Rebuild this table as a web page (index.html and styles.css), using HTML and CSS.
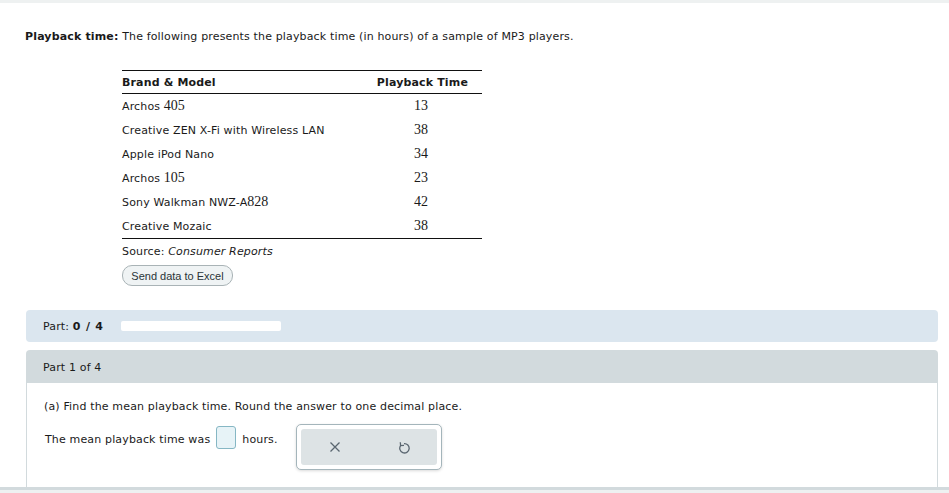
FILE: index.html
```html
<!DOCTYPE html>
<html>
<head>
<meta charset="utf-8">
<link rel="stylesheet" href="styles.css">
</head>
<body>
<div class="topbar"></div>
<div class="page">
  <p class="intro"><b>Playback time:</b> The following presents the playback time (in hours) of a sample of MP3 players.</p>
  <div class="tablewrap">
    <table class="data">
      <thead>
        <tr><th class="c1">Brand &amp; Model</th><th class="c2">Playback Time</th></tr>
      </thead>
      <tbody>
        <tr><td>Archos <span class="m">405</span></td><td class="n">13</td></tr>
        <tr><td>Creative ZEN X-Fi with Wireless LAN</td><td class="n">38</td></tr>
        <tr><td>Apple iPod Nano</td><td class="n">34</td></tr>
        <tr><td>Archos <span class="m">105</span></td><td class="n">23</td></tr>
        <tr><td>Sony Walkman NWZ-A<span class="m">828</span></td><td class="n">42</td></tr>
        <tr><td>Creative Mozaic</td><td class="n">38</td></tr>
      </tbody>
    </table>
    <div class="source">Source: <i>Consumer Reports</i></div>
    <button class="excel">Send data to Excel</button>
  </div>
  <div class="partbar">
    <span>Part: <b>0 / 4</b></span>
    <div class="progress"></div>
  </div>
  <div class="panel">
    <div class="panel-head">Part 1 of 4</div>
    <div class="panel-body">
      <p class="q">(a) Find the mean playback time. Round the answer to one decimal place.</p>
      <div class="answer">
        <span>The mean playback time was</span>
        <span class="input"></span>
        <span>hours.</span>
        <div class="tools">
          <div class="tools-inner">
            <svg width="12" height="12" viewBox="0 0 12 12"><path d="M1.5 1.5 L10.5 10.5 M10.5 1.5 L1.5 10.5" stroke="#5a6670" stroke-width="1.3" fill="none"/></svg>
            <svg width="12" height="14" viewBox="0 0 12 14"><path d="M2.6 5.6 A4.7 4.7 0 1 0 6 3.6" stroke="#5a6670" stroke-width="1.3" fill="none"/><path d="M2.3 2.2 L2.6 5.6 L6 5.4" stroke="#5a6670" stroke-width="1.3" fill="none"/></svg>
          </div>
        </div>
      </div>
    </div>
  </div>
</div>
<div class="bottombar"></div>
</body>
</html>
```
FILE: styles.css
```css
html, body {
  margin: 0;
  padding: 0;
  background: #fff;
}
body {
  font-family: "DejaVu Sans", Verdana, sans-serif;
  font-size: 11px;
  letter-spacing: 0.15px;
  color: #1a1a1a;
  width: 949px;
  height: 493px;
  overflow: hidden;
  position: relative;
}
.topbar {
  height: 3px;
  background: #eef1f1;
}
.page {
  padding: 0 11px 0 26px;
}
.intro {
  margin: 26px 0 0 -1px;
  height: 16px;
  line-height: 16px;
}
.tablewrap {
  margin: 25px 0 0 96px;
}
.data {
  border-collapse: collapse;
  width: 360px;
}
.data thead th {
  border-top: 1.5px solid #111;
  border-bottom: 1.5px solid #111;
  font-weight: bold;
  height: 22px;
  padding: 0;
}
.data th.c1 { text-align: left; }
.data th.c2 { text-align: right; padding-right: 14px; }
.data tbody td {
  height: 24px;
  padding: 0;
}
.data tbody tr:last-child td {
  border-bottom: 1.5px solid #111;
}
.m, .n {
  font-family: "Liberation Serif", "Times New Roman", serif;
  font-size: 14px;
  letter-spacing: 0;
}
.data td.n {
  text-align: right;
  padding-right: 54px;
}
.source {
  margin-top: 5px;
  height: 16px;
  line-height: 16px;
}
.excel {
  margin-top: 5px;
  font-family: "Liberation Sans", Arial, sans-serif;
  font-size: 11px;
  letter-spacing: 0;
  color: #2a3338;
  background: #eff3f4;
  border: 1px solid #a9b3b6;
  border-radius: 10px;
  height: 21px;
  width: 111px;
  padding: 0;
  display: block;
}
.partbar {
  margin-top: 24px;
  height: 32px;
  background: #dbe6ef;
  border-radius: 4px;
  display: flex;
  align-items: center;
  padding-left: 17px;
  gap: 17px;
}
.partbar b { letter-spacing: 0.8px; }
.progress {
  width: 160px;
  height: 10px;
  background: #fff;
  border-radius: 2px;
}
.panel {
  margin-top: 8px;
  border-radius: 4px 4px 0 0;
  overflow: hidden;
}
.panel-head {
  background: #d2dadd;
  height: 33px;
  line-height: 35px;
  padding-left: 17px;
}
.panel-body {
  border-left: 1px solid #d2dadd;
  border-right: 1px solid #d2dadd;
  height: 104px;
  padding-left: 17px;
}
.q {
  margin: 0;
  padding-top: 16px;
  line-height: 16px;
}
.answer {
  display: flex;
  align-items: flex-start;
  margin-top: 11px;
  margin-left: 1px;
}
.answer > span {
  line-height: 16px;
  margin-top: 6px;
}
.answer > span.input {
  width: 18px;
  height: 21px;
  margin: 0 6px 0 6px;
  background: #e7f3f7;
  border: 1px solid #86b7c4;
  border-radius: 3px;
}
.tools {
  margin-left: 18px;
  margin-top: -2px;
  width: 144px;
  height: 44px;
  border: 1px solid #a4b5bb;
  border-radius: 5px;
  background: #fff;
  box-shadow: 0 1px 3px rgba(0,0,0,0.15);
  display: flex;
  align-items: center;
  justify-content: center;
}
.tools-inner {
  width: 136px;
  height: 36px;
  background: #dde3e5;
  border-radius: 3px;
  display: flex;
  align-items: center;
  justify-content: space-between;
  padding: 0 27px 0 28px;
  box-sizing: border-box;
}
.bottombar {
  position: absolute;
  left: 0;
  right: 0;
  top: 487px;
  height: 6px;
  background: #eef1f1;
  border-top: 3px solid #d2dadd;
}
```
